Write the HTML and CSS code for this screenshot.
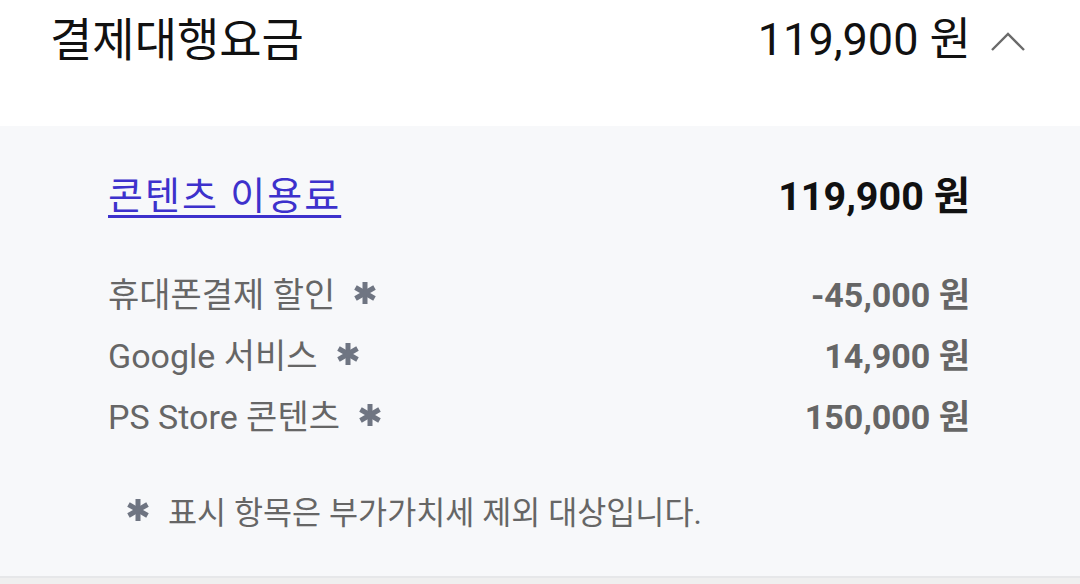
FILE: index.html
```html
<!DOCTYPE html>
<html lang="ko">
<head>
<meta charset="utf-8">
<link rel="stylesheet" href="styles.css">
</head>
<body>
<div class="page">
  <header class="head">
    <div class="head-title">결제대행요금</div>
    <div class="head-right">
      <span class="head-amount">119,900 원</span>
      <svg class="chev" width="36" height="22" viewBox="0 0 36 22"><path d="M2 20 L18 4 L34 20" fill="none" stroke="#6a6a6a" stroke-width="2.4"/></svg>
    </div>
  </header>
  <section class="panel">
    <div class="row main">
      <a class="link" href="#">콘텐츠 이용료</a>
      <span class="amt-main">119,900 원</span>
    </div>
    <div class="row sub first">
      <span class="label">휴대폰결제 할인 <svg class="ast" viewBox="0 0 24 24"><g stroke="#6f7582" stroke-width="5"><path d="M12 1 V23"/><path d="M2.5 6.5 L21.5 17.5"/><path d="M2.5 17.5 L21.5 6.5"/></g></svg></span>
      <span class="amt">-45,000 원</span>
    </div>
    <div class="row sub">
      <span class="label">Google 서비스 <svg class="ast" viewBox="0 0 24 24"><g stroke="#6f7582" stroke-width="5"><path d="M12 1 V23"/><path d="M2.5 6.5 L21.5 17.5"/><path d="M2.5 17.5 L21.5 6.5"/></g></svg></span>
      <span class="amt">14,900 원</span>
    </div>
    <div class="row sub">
      <span class="label">PS Store 콘텐츠 <svg class="ast" viewBox="0 0 24 24"><g stroke="#6f7582" stroke-width="5"><path d="M12 1 V23"/><path d="M2.5 6.5 L21.5 17.5"/><path d="M2.5 17.5 L21.5 6.5"/></g></svg></span>
      <span class="amt">150,000 원</span>
    </div>
    <div class="note">
      <svg class="ast note-ast" viewBox="0 0 24 24"><g stroke="#6f7582" stroke-width="5"><path d="M12 1 V23"/><path d="M2.5 6.5 L21.5 17.5"/><path d="M2.5 17.5 L21.5 6.5"/></g></svg>
      <span>표시 항목은 부가가치세 제외 대상입니다.</span>
    </div>
  </section>
  <div class="bottom"></div>
</div>
</body>
</html>
```
FILE: styles.css
```css
html, body {
  margin: 0;
  padding: 0;
  background: #efefef;
}
body {
  font-family: "Roboto", "Noto Sans CJK KR", sans-serif;
  width: 1080px;
  height: 584px;
  overflow: hidden;
}
.page {
  display: flex;
  flex-direction: column;
}
.head {
  height: 126px;
  background: #ffffff;
  display: flex;
  justify-content: space-between;
  align-items: flex-start;
  padding: 0 54px 0 50px;
}
.head-title {
  font-size: 46px;
  line-height: 80px;
  color: #111;
}
.head-right {
  display: flex;
  align-items: center;
  height: 80px;
  gap: 19px;
}
.head-amount {
  font-size: 45px;
  color: #111;
  line-height: 80px;
}
.chev {
  display: block;
  margin-top: 2px;
}
.panel {
  background: #f7f8fa;
  height: 452px;
  box-sizing: border-box;
  padding: 36px 110px 0 108px;
  display: flex;
  flex-direction: column;
  border-bottom: 2px solid #e6e7e9;
}
.row {
  display: flex;
  justify-content: space-between;
  align-items: center;
}
.main {
  height: 60px;
}
.link {
  color: #3d31cc;
  font-size: 38px;
  letter-spacing: 2px;
  text-decoration: underline;
  text-decoration-thickness: 3px;
  text-underline-offset: 6px;
}
.amt-main {
  font-size: 39.5px;
  font-weight: 700;
  color: #111;
}
.sub {
  height: 61px;
  font-size: 34px;
  color: #666;
}
.sub.first {
  margin-top: 40px;
}
.label {
  display: flex;
  align-items: center;
  gap: 8px;
}
.amt {
  font-weight: 700;
  font-size: 34px;
  color: #666;
}
.ast {
  width: 24px;
  height: 24px;
  display: block;
  margin-left: 10px;
}
.note {
  margin-top: 35px;
  height: 60px;
  display: flex;
  align-items: center;
  gap: 18px;
  padding-left: 18px;
  font-size: 31.6px;
  color: #666;
}
.note-ast {
  margin-left: 0;
}
.bottom {
  height: 6px;
  background: #efefef;
}
```
